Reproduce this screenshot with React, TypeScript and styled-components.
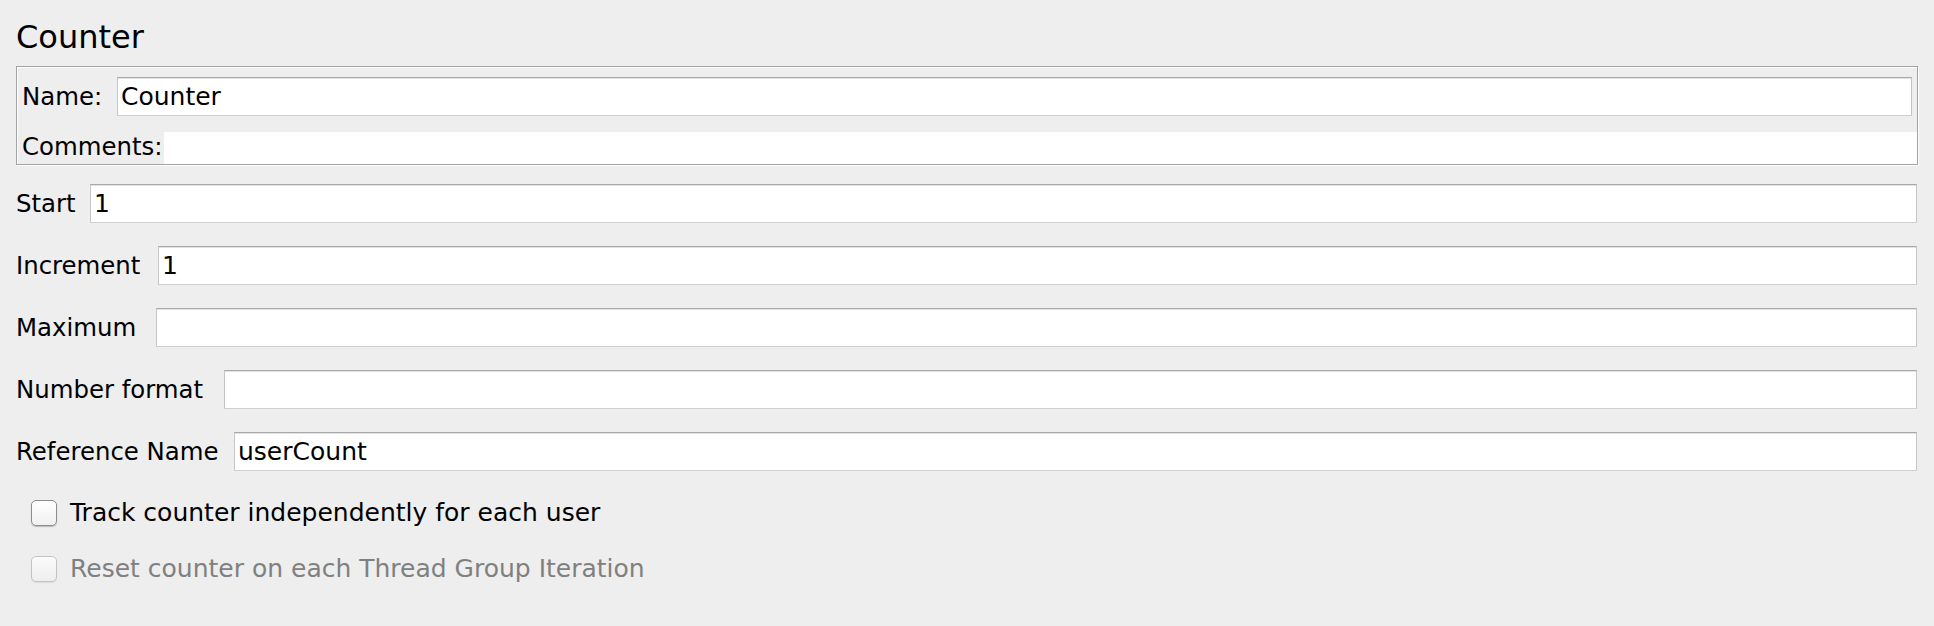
import * as React from 'react'
import styled, { createGlobalStyle } from 'styled-components'

const GlobalStyle = createGlobalStyle`
  html, body {
    margin: 0;
    padding: 0;
    background: #eeeeee;
  }
  body {
    font-family: "DejaVu Sans", "Liberation Sans", sans-serif;
    font-size: 25px;
    color: #000;
  }
`

const Page = styled('div')`
  display: flex;
  flex-flow: column;
  padding: 17px 16px 40px 16px;
`

const Title = styled('h1')`
  margin: 0 0 9px 0;
  font-size: 32px;
  font-weight: normal;
  line-height: 40px;
`

const NameBox = styled('section')`
  display: flex;
  flex-flow: column;
  gap: 16px;
  padding: 10px 0 0 5px;
  border: 1px solid #a3a3a3;
  box-shadow: inset 1px 1px 0 #fff, 1px 1px 0 #fff;
`

const Row = styled('div')`
  display: flex;
  align-items: center;
  height: 39px;
`

const BoxRow = styled(Row)`
  margin-right: 5px;
`

const CommentsRow = styled('div')`
  display: flex;
  align-items: flex-start;
  height: 32px;
`

const Label = styled('label')<{ $w: number }>`
  flex: 0 0 ${p => p.$w}px;
  font-size: 24.4px;
  line-height: 29px;
  white-space: nowrap;
`

const Field = styled('input')`
  flex: 1 1 auto;
  min-width: 0;
  height: 39px;
  box-sizing: border-box;
  margin: 0;
  padding: 0 3px;
  font: inherit;
  color: #000;
  background: #fff;
  border: 1px solid;
  border-color: #a9a9a9 #c6c6c6 #d0d0d0 #c6c6c6;
  box-shadow: inset 0 1px 0 #e2e2e2;
  outline: none;
  border-radius: 0;
`

const CommentsArea = styled('div')`
  flex: 1 1 auto;
  align-self: stretch;
  background: #fff;
`

const Form = styled('div')`
  display: flex;
  flex-flow: column;
  gap: 23px;
  margin-top: 19px;
  margin-right: 1px;
`

const Options = styled('div')`
  display: flex;
  flex-flow: column;
  gap: 28px;
  margin-top: 28px;
  padding-left: 15px;
`

const CheckRow = styled('label')<{ $disabled?: boolean }>`
  display: flex;
  align-items: center;
  gap: 13px;
  height: 28px;
  line-height: 28px;
  color: ${p => (p.$disabled ? '#808080' : '#000')};
`

const Box = styled('span')<{ $disabled?: boolean }>`
  flex: 0 0 26px;
  height: 26px;
  box-sizing: border-box;
  border-radius: 5px;
  border: 1px solid ${p => (p.$disabled ? '#c3c3c3' : '#8d8d8d')};
  background: ${p =>
    p.$disabled
      ? 'linear-gradient(#fbfbfb, #eeeeee)'
      : 'linear-gradient(#ffffff, #f0f0f0)'};
  box-shadow: 0 1px 1px ${p => (p.$disabled ? 'rgba(0,0,0,0.08)' : 'rgba(0,0,0,0.22)')};
`

const fields = [
  { label: 'Start', w: 74, value: '1' },
  { label: 'Increment', w: 142, value: '1' },
  { label: 'Maximum', w: 140, value: '' },
  { label: 'Number format', w: 208, value: '' },
  { label: 'Reference Name', w: 218, value: 'userCount' },
]

const App: React.FunctionComponent = () => (
  <Page>
    <GlobalStyle />
    <Title>Counter</Title>
    <NameBox>
      <BoxRow>
        <Label $w={95}>Name:</Label>
        <Field readOnly defaultValue="Counter" />
      </BoxRow>
      <CommentsRow>
        <Label $w={142}>Comments:</Label>
        <CommentsArea />
      </CommentsRow>
    </NameBox>
    <Form>
      {fields.map(f => (
        <Row key={f.label}>
          <Label $w={f.w}>{f.label}</Label>
          <Field readOnly defaultValue={f.value} />
        </Row>
      ))}
    </Form>
    <Options>
      <CheckRow>
        <Box />
        Track counter independently for each user
      </CheckRow>
      <CheckRow $disabled>
        <Box $disabled />
        Reset counter on each Thread Group Iteration
      </CheckRow>
    </Options>
  </Page>
)

export default App
